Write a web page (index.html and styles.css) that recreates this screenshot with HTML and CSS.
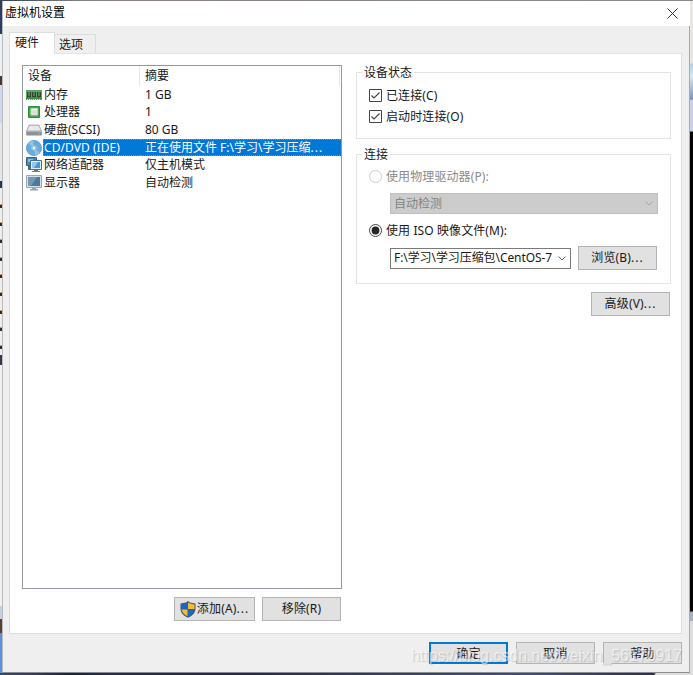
FILE: index.html
```html
<!DOCTYPE html>
<html lang="zh-CN">
<head>
<meta charset="utf-8">
<title>虚拟机设置</title>
<link rel="stylesheet" href="styles.css">
</head>
<body>
<div class="desktop">
  <div class="edge-left"></div>
  <main class="dialog">
    <header class="titlebar">
      <span>虚拟机设置</span>
      <svg class="close" width="11" height="11" viewBox="0 0 11 11"><path d="M.5 .5l10 10M10.5 .5l-10 10" stroke="#333" fill="none"/></svg>
    </header>
    <nav class="tabs"><span class="tab active">硬件</span><span class="tab">选项</span></nav>
    <section class="panel">
      <div class="left">
        <div class="list">
          <div class="row head"><span class="name">设备</span><span class="summary">摘要</span></div>
          <div class="row">
            <svg class="icon" viewBox="0 0 16 16"><path fill="#55aa55" d="M0 3h16v10H0z"/><path fill="#3c8f46" d="M0 10h16v2H0z"/><path fill="#324436" d="M1 5h4v5H1zM6 5h4v5H6zM11 5h4v5h-4z"/><path stroke="#87a886" d="M3 5v4M8 5v4M13 5v4"/><path stroke="#c9e5b2" stroke-dasharray="1 1" d="M1 12.5h14"/></svg>
            <span class="name">内存</span><span class="summary">1 GB</span></div>
          <div class="row">
            <svg class="icon" viewBox="0 0 16 16"><path fill="#48a653" stroke="#298c39" d="M2.5 2.5h11v11h-11z"/><path fill="#f5f5f2" stroke="#b8ddb7" d="M5 4.5h6.500V11H5z"/><path fill="#dedede" d="M6 6h5v5H6z"/></svg>
            <span class="name">处理器</span><span class="summary">1</span></div>
          <div class="row">
            <svg class="icon" viewBox="0 0 16 16"><path fill="#c9ced5" stroke="#9a9fa7" stroke-width=".7" d="M3 3h10l2.500 6v4H.5V9z"/><path fill="#e7e9ed" d="M3.600 4h8.800l1.800 4H1.800z"/><path fill="#8b929b" d="M.5 9.500h15v3.800H.5z"/><path fill="#a9b0b9" d="M1 9h14v1H1z"/><path fill="#61e169" d="M12 11h2v1h-2z"/></svg>
            <span class="name">硬盘(SCSI)</span><span class="summary">80 GB</span></div>
          <div class="row selected">
            <svg class="icon" viewBox="0 0 16 16"><circle cx="8" cy="8" r="7.600" fill="#68acd9" stroke="#4c91bf" stroke-width=".7"/><path fill="#8bc4e6" d="M8 8L2 3A8 8 0 0 1 7 .6zM8 8l6 5a8 8 0 0 1-5 2.500z"/><circle cx="8" cy="8" r="2.800" fill="#9cc6dd"/><circle cx="8" cy="8" r="1.200" fill="#edf6fa"/></svg>
            <span class="name">CD/DVD (IDE)</span><span class="summary">正在使用文件 F:\学习\学习压缩<span class="dots">...</span></span></div>
          <div class="row">
            <svg class="icon" viewBox="0 0 16 16"><path fill="#388abf" stroke="#42657f" d="M.5 .5h10v8H.5z"/><path fill="#84c6ec" d="M2 2h5v3H2z"/><path fill="#4b6982" d="M2 9h2v3h2v1H2z"/><path fill="#e2eff7" stroke="#4a6d8b" d="M4.500 3.500h11v9h-11z"/><path fill="#3e9bd8" d="M6 5h8v6H6z"/><path fill="#90c9ed" d="M6 5h6l-4 6H6z"/><path fill="#6c7e8a" d="M8 13h4v1h2v1H6v-1h2z"/></svg>
            <span class="name">网络适配器</span><span class="summary">仅主机模式</span></div>
          <div class="row">
            <svg class="icon" viewBox="0 0 16 16"><path fill="#d6e0e8" stroke="#9aa9b6" d="M.5 .5h15v12H.5z"/><path fill="#4d799f" d="M2 2h12v9H2z"/><path fill="#7599b5" d="M2 2h9l-6 9H2z"/><path fill="#94a5b2" d="M6 13h4v1h2v1.500H4V14h2z"/></svg>
            <span class="name">显示器</span><span class="summary">自动检测</span></div>
        </div>
        <div class="list-actions">
          <button class="btn add"><svg width="16" height="17" viewBox="0 0 16 17"><path fill="#465969" d="M8 0l2 1.500 5.500 1v5.200C15.500 12 12 15 8 16.800 4 15 .5 12 .5 7.700V2.500L6 1.500z"/><path fill="#1769c5" d="M7.500 1.500V8h-6V3.400L6 2.500z"/><path fill="#f8b933" d="M8 1.500l2 1 4.500.9V8H8z"/><path fill="#f8b933" d="M1.500 8.500h6v6.800C4.500 13.800 2 11.500 1.500 8.500z"/><path fill="#1769c5" d="M8 8.500h6.500C14 11.500 11.500 13.900 8 15.500z"/></svg><span>添加(A)<span class="dots">...</span></span></button>
          <button class="btn">移除(R)</button>
        </div>
      </div>
      <div class="right">
        <div class="group status">
          <div class="legend">设备状态</div>
          <label class="option"><svg class="mark" viewBox="0 0 13 13"><path class="box" d="M.5 .5h12v12H.5z"/><path class="tick" d="M2.500 6.500L5 9l5.500-5.500"/></svg><span>已连接(C)</span></label>
          <label class="option"><svg class="mark" viewBox="0 0 13 13"><path class="box" d="M.5 .5h12v12H.5z"/><path class="tick" d="M2.500 6.500L5 9l5.500-5.500"/></svg><span>启动时连接(O)</span></label>
        </div>
        <div class="group connection">
          <div class="legend">连接</div>
          <label class="option disabled"><svg class="mark" viewBox="0 0 13 13"><circle cx="6.500" cy="6.500" r="6" fill="#fff" stroke="#ccc"/></svg><span>使用物理驱动器(P):</span></label>
          <div class="select inactive"><span>自动检测</span><svg width="8" height="5" viewBox="0 0 8 5"><path d="M.5 .5L4 4 7.500 .5"/></svg></div>
          <label class="option iso"><svg class="mark" viewBox="0 0 13 13"><circle cx="6.500" cy="6.500" r="6" fill="#fff" stroke="#444"/><circle cx="6.500" cy="6.500" r="3.900" fill="#262626"/></svg><span>使用 ISO 映像文件(M):</span></label>
          <div class="file"><div class="select path"><span>F:\学习\学习压缩包\CentOS-7</span><svg width="8" height="5" viewBox="0 0 8 5"><path d="M.5 .5L4 4 7.500 .5"/></svg></div><button class="btn">浏览(B)<span class="dots">...</span></button></div>
        </div>
        <button class="btn advanced">高级(V)<span class="dots">...</span></button>
      </div>
    </section>
    <footer class="footer"><button class="btn primary">确定</button><button class="btn">取消</button><button class="btn">帮助</button></footer>
  </main>
  <div class="edge-right"></div>
  <div class="watermark">https://blog.csdn.net/weixin_56170917</div>
</div>
</body>
</html>
```
FILE: styles.css
```css
* { box-sizing: border-box; }
body { margin: 0; font: 12px/16px "Noto Sans", "Noto Sans CJK SC", sans-serif; color: #181818; }
.desktop {
  position: relative; width: 693px; height: 675px; overflow: hidden;
  display: grid; grid-template: 1fr / 2px 688px 3px; padding: 1px 0 2px;
  background: linear-gradient(90deg, #34457c 0, #303a69 35px, #17233f 70px, #28285a 110px, #29294f 250px, #34427c 430px, #3a4b94 530px, #302d50 654px, #dedede 656px) bottom / 100% 3px no-repeat, linear-gradient(90deg, #34415c 0, #848484 85px, #8b8083 100px, #8b8b8b 100%);
}
.edge-left {
  background:
    repeating-linear-gradient(transparent 0 6px, #cc9b54 6px 7px, #302c2b 7px 10px, transparent 10px 17.6px) 0 197px / 2px 158px no-repeat,
    linear-gradient(#2b3c65 0 33px, #e9f0f6 33px 75px, #45382f 75px 84px, #cdd9ee 84px 122px, #e6e6e6 122px 180px, #253850 180px 187px, #eee 187px 354px, #343b46 354px 364px, #f1f1f1 364px 605px, #c6d0e5 605px 618px, #514335 618px 632px, #5b91dc 632px);
}
.edge-right { background: linear-gradient(#e8e5e5 0 62px, #b5d0e6 63px, #dbe8f5 75px, #7f9cc5 97px, #707988 98px, #c9d1ec 99px 130px, #000 131px 610px, #a4b2bb 611px 620px, #ddd 620px); }
.dialog { display: grid; grid-template-rows: 25px 27px 581px 1fr; background: #efefef; border-right: 1px solid #aaa; border-bottom: 1px solid #8b8b8b; border-left: 1px solid #bbb; }
.titlebar { display: flex; align-items: center; justify-content: space-between; padding: 0 12px 1px 2px; background: #fff; color: #000; }
.tabs { display: flex; align-items: flex-end; padding-left: 6px; }
.tab { width: 41px; height: 19px; padding-left: 4px; line-height: 19px; border: 1px solid #ddd; border-width: 1px 1px 0 0; }
.tab.active { position: relative; width: 46px; height: 22px; line-height: 20px; padding-left: 5px; background: #fff; border-left-width: 1px; margin-bottom: -1px; }
.panel { margin: 0 8px 0 6px; border: 1px solid #ddd; border-top-color: #e4e4e4; background: #fff; padding: 11px 10px 0 12px; display: flex; gap: 14px; }
.left { width: 320px; }
.list { height: 524px; border: 1px solid #9698a0; }
.row { display: grid; grid-template-columns: 21px 96px 1fr; align-items: center; height: 17.6px; padding-right: 1px; white-space: nowrap; }
.row.head { height: 20px; grid-template-columns: 117px 1fr; }
.head .name { height: 20px; line-height: 20px; padding-left: 5px; border-right: 1px solid #e5e5e5; }
.head .summary { height: 20px; line-height: 20px; border-right: 1px solid #e5e5e5; }
.icon { width: 16px; height: 16px; margin-left: 3px; }
.summary { padding-left: 5px; }
.selected { color: #fff; background: linear-gradient(90deg, #fff 0 20px, #0078d7 20px); }
.selected .name, .selected .summary { height: 17.6px; border: dotted #9a8a76; border-width: 1px 0; line-height: 15.6px; }
.selected .name { border-left-width: 1px; margin-left: -1px; letter-spacing: .06px; }
.dots { letter-spacing: 1px; }
.list-actions { display: flex; justify-content: flex-end; gap: 7px; padding: 8px 1px 0 0; }
.btn { display: flex; align-items: center; justify-content: center; width: 79px; height: 24px; padding: 0; border: 1px solid #b4b4b4; background: #e1e1e1; color: #181818; font: inherit; letter-spacing: .15px; white-space: nowrap; }
.add { width: 81px; gap: 1px; }
.right { width: 315px; padding-top: 7px; }
.group { position: relative; border: 1px solid #e4e4e4; }
.legend { position: absolute; top: -8px; left: 5px; padding: 0 2px; background: #fff; }
.status { height: 67px; padding: 12px 0 0 12px; }
.option { display: flex; align-items: center; gap: 4px; height: 21px; letter-spacing: .1px; }
.mark { width: 13px; height: 13px; flex: none; }
.box { fill: #fff; stroke: #444; }
.tick { fill: none; stroke: #444; stroke-width: 1.2; }
.connection { height: 130px; margin-top: 15px; padding: 11px 0 0 12px; }
.disabled { color: #8b8b8b; }
.select { display: flex; align-items: center; justify-content: space-between; height: 21px; padding: 0 4px 0 3px; border: 1px solid #7a7a7a; background: #fff; white-space: nowrap; }
.select path { fill: none; stroke: #666; }
.inactive { width: 268px; margin: 6px 0 0 21px; border-color: #bfbfbf; background: #ccc; color: #848484; }
.inactive path { stroke: #a6a6a6; }
.iso { margin-top: 6px; }
.file { display: flex; align-items: center; gap: 7px; margin: 5px 0 0 21px; }
.path { width: 181px; letter-spacing: -.08px; }
.advanced { margin: 8px 1px 0 auto; }
.footer { display: flex; align-items: flex-start; justify-content: flex-end; gap: 8px; padding: 8px 8px 0 0; }
.footer .btn { height: 22px; padding-top: 1px; }
.footer .primary { border: 2px solid #0078d7; }
.watermark { position: absolute; left: 411px; top: 646px; font: 15.95px/20px "Liberation Sans", sans-serif; color: rgba(255,255,255,.6); text-shadow: 1px 1px 1px rgba(110,110,110,.3); white-space: nowrap; }
```
